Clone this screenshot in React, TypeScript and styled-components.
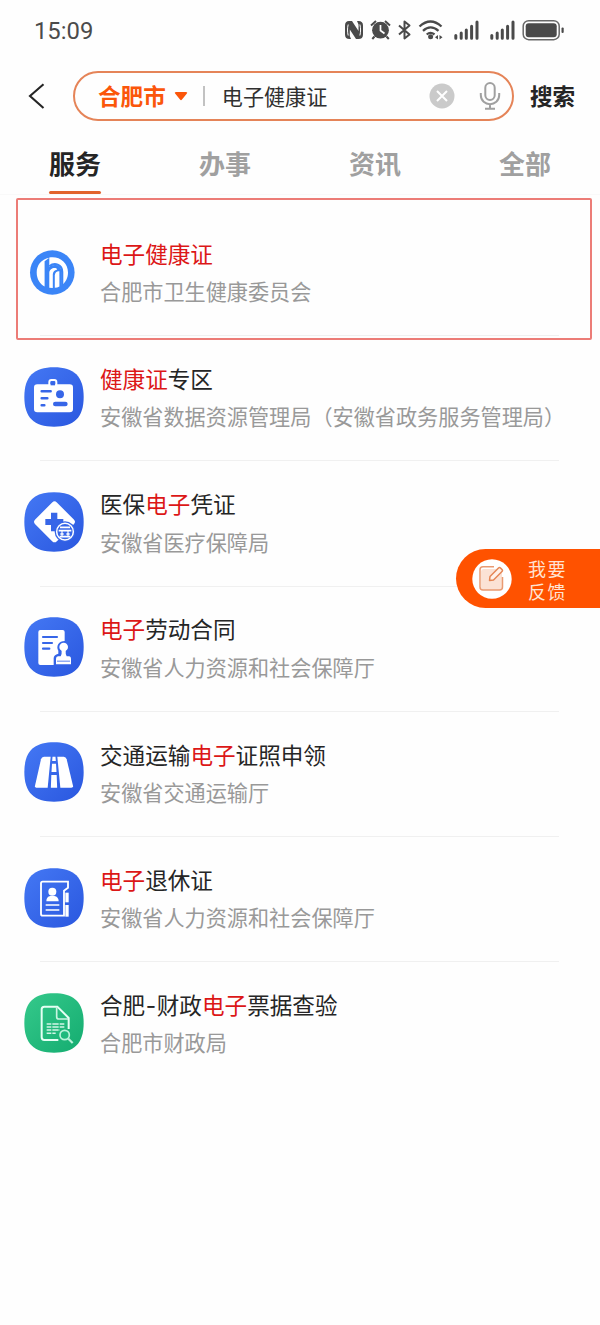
import React from 'react';
import styled, { createGlobalStyle } from 'styled-components';

const GlobalStyle = createGlobalStyle`
  *, *::before, *::after { box-sizing: border-box; }
  body { margin: 0; background: #fefefe; }
`;

const Page = styled.div`
  position: relative;
  width: 600px;
  height: 1325px;
  overflow: hidden;
  background: #fefefe;
  color: #252525;
  font-family: 'Noto Sans CJK SC', sans-serif;
`;

const StatusBar = styled.header`
  display: flex;
  align-items: center;
  justify-content: space-between;
  height: 60px;
  padding: 0 35px 0 34px;
`;

const Clock = styled.span`
  padding-top: 1px;
  font: 400 23.8px/28px Roboto, sans-serif;
  color: #4b4b4b;
`;

const StatusIcons = styled.svg`
  display: block;
  width: 222px;
  height: 24px;
`;

const SearchRow = styled.div`
  display: flex;
  align-items: center;
  height: 50px;
  margin-top: 11px;
  padding-left: 27px;
`;

const BackIcon = styled.svg`
  width: 20px;
  height: 28px;
  margin-right: 26px;
`;

const SearchBox = styled.div`
  display: flex;
  align-items: center;
  width: 441px;
  height: 50px;
  padding: 0 11px 1px 23px;
  border: 2px solid #e58458;
  border-radius: 25px;
`;

const City = styled.span`
  font-size: 22.6px;
  line-height: 32px;
  font-weight: 700;
  color: #fb560a;
`;

const Caret = styled.svg`
  width: 14px;
  height: 10px;
  margin-left: 8px;
`;

const Separator = styled.span`
  width: 2px;
  height: 20px;
  margin: 0 17px 0 15px;
  background: #c2c2c2;
`;

const Query = styled.span`
  flex: 1;
  font-size: 21.1px;
  line-height: 32px;
  color: #303030;
`;

const ClearIcon = styled.svg`
  width: 26px;
  height: 26px;
  margin-right: 24px;
`;

const MicIcon = styled.svg`
  width: 22px;
  height: 30px;
`;

const SearchButton = styled.button`
  margin: 0 0 0 16px;
  padding: 0;
  border: 0;
  background: none;
  font: 700 22.6px/32px 'Noto Sans CJK SC', sans-serif;
  color: #252525;
`;

const Tabs = styled.nav`
  display: flex;
  height: 74px;
  border-bottom: 1px solid #f9f9f9;
`;

const Tab = styled.div<{ $active?: boolean }>`
  display: flex;
  flex: 1;
  flex-direction: column;
  align-items: center;
  padding-top: 22px;
  font-size: 26px;
  line-height: 40px;
  font-weight: 700;
  color: ${({ $active }) => ($active ? '#252525' : '#a0a0a0')};

  &::after {
    content: '';
    width: 52px;
    height: 3.4px;
    margin-top: 8px;
    border-radius: 2px;
    background: ${({ $active }) => ($active ? '#e2632c' : 'transparent')};
  }
`;

const List = styled.main`
  padding: 16px 41px 0 24px;
`;

const Row = styled.section`
  position: relative;
  display: flex;
  align-items: flex-start;
  height: 125.2px;

  &:not(:last-child)::after {
    content: '';
    position: absolute;
    left: 16px;
    right: 0;
    bottom: 0;
    height: 1px;
    background: #f0f0f0;
  }
`;

const RowIcon = styled.svg`
  flex: none;
  width: 60px;
  height: 60px;
  margin: 30.7px 16px 0 0;
`;

const RowText = styled.div`
  display: flex;
  flex-direction: column;
  gap: 7.4px;
  padding-top: 27.8px;
  white-space: nowrap;
`;

const Title = styled.div`
  font-size: 22.6px;
  line-height: 30px;
  color: #252525;
`;

const Match = styled.span`
  color: #dc1717;
`;

const Dash = styled.span`
  padding: 0 0.6px;
  font-family: Inter, sans-serif;
  line-height: 1;
`;

const Agency = styled.div`
  font-size: 21.15px;
  line-height: 30px;
  color: #999999;
`;

const Highlight = styled.div`
  position: absolute;
  left: 16px;
  top: 198px;
  width: 576px;
  height: 142px;
  border: 2px solid #ec7c77;
  border-radius: 2px;
  pointer-events: none;
`;

const Feedback = styled.aside`
  position: absolute;
  top: 549px;
  right: 0;
  display: flex;
  align-items: center;
  width: 144px;
  height: 59px;
  padding-left: 16px;
  border-radius: 30px 0 0 30px;
  background: #ff5200;
`;

const FeedbackIcon = styled.svg`
  width: 40px;
  height: 40px;
`;

const FeedbackText = styled.div`
  width: 42px;
  margin: 2px 0 0 16px;
  font-size: 18px;
  line-height: 22.5px;
  letter-spacing: 1.5px;
  color: #ffe3d3;
`;

const SQUIRCLE =
  'M117 22 C177 22 206 49 206 111 C206 173 177 200 117 200 C57 200 28 173 28 111 C28 49 57 22 117 22Z';

function Tile({ green, children }: { green?: boolean; children: React.ReactNode }) {
  const id = green ? 'tile-green' : 'tile-blue';
  return (
    <RowIcon viewBox="27 21 180 180">
      <defs>
        <linearGradient id={id} x1="0" y1="0" x2="1" y2="1">
          <stop offset="0" stopColor={green ? '#35c98b' : '#4478f4'} />
          <stop offset="1" stopColor={green ? '#14ac70' : '#2a57df'} />
        </linearGradient>
      </defs>
      <path d={SQUIRCLE} fill={`url(#${id})`} />
      {children}
    </RowIcon>
  );
}

const BLUE = '#3766e8';

const HealthLogo = () => (
  <RowIcon viewBox="0 0 60 60">
    <circle cx="28.3" cy="30.5" r="22.3" fill="#3b85f7" />
    <g transform="translate(0 .5)">
      <path d="M25.3 15.3 C17 16.7 12.7 23 12.7 30 C12.7 36.6 16 41.5 20.6 43.9 V18.7Z" fill="#fff" />
      <path
        d="M25.3 15.1 V24.5 C30 20.8 37.5 22.2 37.5 29.5 V42.8 C41.5 40 44 35.5 44 30 C44 21 37 14.8 28.5 14.8 C27.3 14.8 26.2 14.9 25.3 15.1Z"
        fill="#fff"
      />
      <path d="M25.3 45.3 V30.2 C25.3 25.6 32 24 33.2 27 C29.6 28 28.8 30 28.8 33 V45.5Z" fill="#fff" />
      <path d="M30.8 45.3 V33 C30.8 30 33 28.5 35.4 28.8 V44 C34 44.8 32.4 45.2 30.8 45.3Z" fill="#fff" />
      <path d="M25.3 23.8 C30.6 19.7 38.2 21.8 38.2 29.5 V43" fill="none" stroke="#3b85f7" strokeWidth="2.2" />
    </g>
  </RowIcon>
);

const BadgeIcon = () => (
  <Tile>
    <path d="M103 76 V66 Q103 60 109 60 H118 Q124 60 124 66 V76" fill="none" stroke="#fff" strokeWidth="6" />
    <rect x="57" y="73" width="117" height="84" rx="10" fill="#fff" />
    <rect x="107" y="67" width="13" height="9" fill={BLUE} />
    <g stroke={BLUE} strokeLinecap="round" strokeWidth="7.5">
      <path d="M80 94H107M80 115H97M80 136H88" />
      <path d="M121 132H151" strokeWidth="14" />
    </g>
    <circle cx="135" cy="103" r="12" fill={BLUE} />
  </Tile>
);

const MedicalIcon = () => (
  <Tile>
    <rect x="72.5" y="64.5" width="92" height="92" rx="10" transform="rotate(45 118.5 110.5)" fill="#fff" />
    <path d="M108 83h19v19h18v18h-18v19h-19v-19H91v-18h17z" fill={BLUE} />
    <circle cx="150" cy="140" r="31" fill={BLUE} />
    <circle cx="150" cy="140" r="25" fill={BLUE} stroke="#fff" strokeWidth="4.5" />
    <path
      d="M135 127H165M131 137H169M136 147H146M154 147H164M134 155H166"
      stroke="#fff"
      strokeWidth="5"
      fill="none"
    />
    <path d="M141 137V154M159 137V154" stroke="#fff" strokeWidth="3.5" />
  </Tile>
);

const ContractIcon = () => (
  <Tile>
    <path
      d="M76 60H143Q149 60 149 66V93C132 93 122 108 130 122V131Q116 134 116 145V165H76Q70 165 70 159V66Q70 60 76 60Z"
      fill="#fff"
    />
    <path d="M84 81H126M84 99H111M84 116H103" stroke={BLUE} strokeWidth="6.5" strokeLinecap="round" />
    <circle cx="146" cy="111" r="13" fill="#fff" />
    <path d="M140 120H152Q151 132 155 139H163Q168 140 168 146V163H123V146Q123 140 129 139H137Q141 132 140 120Z" fill="#fff" />
    <path d="M126 153.5H165" stroke={BLUE} strokeWidth="2.5" />
  </Tile>
);

const RoadIcon = () => (
  <Tile>
    <path d="M87 65H107L98 158H64Q59 158 60 152L78 73Q80 65 87 65Z" fill="#fff" />
    <path d="M127 65H146Q153 65 155 73L174 152Q175 158 169 158H136Z" fill="#fff" />
    <path d="M112.5 65h9l1 13h-11zM111 86h12l1.5 25h-15zM109 120h16l1.5 38h-19z" fill="#fff" />
  </Tile>
);

const ContactIcon = () => (
  <Tile>
    <path
      d="M147 164H83Q78 164 78 159V67Q78 62 83 62H159V80L147 89Z"
      fill="none"
      stroke="#fff"
      strokeWidth="5.5"
    />
    <circle cx="112" cy="92" r="12" fill="#fff" />
    <path d="M94 121Q94 107 106 105H118Q131 107 131 121Z" fill="#fff" />
    <path d="M92 132H133M92 147H133" stroke="#fff" strokeWidth="4.5" />
    <rect x="151" y="95" width="10" height="29" fill="#fff" />
    <rect x="151" y="132" width="10" height="35" fill="#fff" />
  </Tile>
);

const InvoiceIcon = () => (
  <Tile green>
    <path
      d="M130 162H88Q80 162 80 154V70Q80 62 88 62H127L161 96V129"
      fill="none"
      stroke="#e5fff4"
      strokeWidth="6"
    />
    <path d="M125 64V92Q125 99 132 99H159" fill="none" stroke="#c9f4e1" strokeWidth="5" />
    <path
      d="M95 114H148M95 123H148M95 132H135M95 142H122"
      stroke="#d3f5e6"
      strokeWidth="4.5"
      strokeDasharray="14 3 19 3"
    />
    <circle cx="149" cy="147" r="14" fill="#1fb97c" stroke="#baf3da" strokeWidth="5" />
    <path d="M160 158L173 171" stroke="#baf3da" strokeWidth="6.5" />
  </Tile>
);

type Part = { text: string; hit?: boolean; dash?: boolean };

const services: { icon: React.ComponentType; title: Part[]; agency: string }[] = [
  { icon: HealthLogo, title: [{ text: '电子健康证', hit: true }], agency: '合肥市卫生健康委员会' },
  {
    icon: BadgeIcon,
    title: [{ text: '健康证', hit: true }, { text: '专区' }],
    agency: '安徽省数据资源管理局（安徽省政务服务管理局）',
  },
  {
    icon: MedicalIcon,
    title: [{ text: '医保' }, { text: '电子', hit: true }, { text: '凭证' }],
    agency: '安徽省医疗保障局',
  },
  {
    icon: ContractIcon,
    title: [{ text: '电子', hit: true }, { text: '劳动合同' }],
    agency: '安徽省人力资源和社会保障厅',
  },
  {
    icon: RoadIcon,
    title: [{ text: '交通运输' }, { text: '电子', hit: true }, { text: '证照申领' }],
    agency: '安徽省交通运输厅',
  },
  {
    icon: ContactIcon,
    title: [{ text: '电子', hit: true }, { text: '退休证' }],
    agency: '安徽省人力资源和社会保障厅',
  },
  {
    icon: InvoiceIcon,
    title: [
      { text: '合肥' },
      { text: '-', dash: true },
      { text: '财政' },
      { text: '电子', hit: true },
      { text: '票据查验' },
    ],
    agency: '合肥市财政局',
  },
];

const INK = '#4a4a4a';

const StatusGlyphs = () => (
  <StatusIcons viewBox="343 18 222 24">
    <path d="M349 21H352L358.5 31V24.5L357 21H358.5Q363 21 363 25.5V34.5Q363 39 358.5 39H356L349.8 29.5V36L351 39H349.5Q345 39 345 34.5V25.5Q345 21 349 21Z" fill={INK} />
    <path
      d="M348.2 35.5C347.3 32 347.3 28 348.2 24.5M359.9 24.5C360.8 28 360.8 32 359.9 35.5M353.5 20.5L358 27M350.5 33.5L355 39.5"
      fill="none"
      stroke="#fefefe"
      strokeWidth="1"
    />
    <circle cx="380.5" cy="30.2" r="8.4" fill={INK} />
    <path
      d="M371 25.5L376 21M390 25.5L385 21M374.5 36.5L372.3 39M386.5 36.5L388.8 39"
      stroke={INK}
      strokeWidth="2"
    />
    <path d="M380.5 25V30.5L384.5 33.5" fill="none" stroke="#fefefe" strokeWidth="1.7" />
    <path
      d="M399 25.5L409.5 34.5L404.5 38.5V21.5L409.5 25.5L399 34.5"
      fill="none"
      stroke={INK}
      strokeWidth="2"
      strokeLinejoin="round"
    />
    <path
      d="M419.5 26.5Q430.5 16.5 441.5 26.5M423 30.8Q430.5 24 438.5 30.8M426.7 34.5Q430.5 31.2 434.5 34.5"
      fill="none"
      stroke={INK}
      strokeWidth="2.3"
    />
    <circle cx="430.6" cy="36.8" r="2.5" fill={INK} />
    <path d="M438 35v4.4l-3-2.2zM439.5 35v4.4l3-2.2z" fill={INK} />
    {[454, 490].map((x) => (
      <path
        key={x}
        d={`M${x + 1.8} 38.2V35.5M${x + 7.2} 38.2V33M${x + 12.3} 38.2V30M${x + 17.6} 38.2V26.3M${x + 23} 38.2V22`}
        stroke={INK}
        strokeWidth="3"
        strokeLinecap="round"
      />
    ))}
    <rect x="523.2" y="20.7" width="36" height="19" rx="5.5" fill="none" stroke="#686868" strokeWidth="1.5" />
    <rect x="525.7" y="23.2" width="31" height="14" rx="3" fill={INK} />
    <rect x="561.5" y="27.5" width="2.2" height="5.5" rx="1" fill={INK} />
  </StatusIcons>
);

const renderPart = ({ text, hit, dash }: Part) => {
  if (hit) return <Match key={text}>{text}</Match>;
  if (dash) return <Dash key={text}>{text}</Dash>;
  return text;
};

export default function App() {
  return (
    <Page>
      <GlobalStyle />
      <StatusBar>
        <Clock>15:09</Clock>
        <StatusGlyphs />
      </StatusBar>

      <SearchRow>
        <BackIcon viewBox="0 0 20 28" fill="none" stroke="#252525" strokeWidth="2.1">
          <path d="M16.5 2.2L3 14L16.5 26" />
        </BackIcon>
        <SearchBox>
          <City>合肥市</City>
          <Caret viewBox="0 0 14 10">
            <path d="M2 1H12Q14 1 12.7 2.7L8 8.5Q7 9.8 6 8.5L1.3 2.7Q0 1 2 1Z" fill="#fb560a" />
          </Caret>
          <Separator />
          <Query>电子健康证</Query>
          <ClearIcon viewBox="0 0 26 26">
            <circle cx="13" cy="13" r="12.5" fill="#cacaca" />
            <path d="M8 8L18 18M18 8L8 18" stroke="#fefefe" strokeWidth="2" />
          </ClearIcon>
          <MicIcon viewBox="0 0 22 30" fill="none" stroke="#a0a0a0" strokeWidth="2">
            <rect x="6.3" y="2" width="9.4" height="17" rx="4.7" />
            <path d="M1.8 12V14C1.8 26.2 20.2 26.2 20.2 14V12M11 23V27.5M6 27.7H16" />
          </MicIcon>
        </SearchBox>
        <SearchButton>搜索</SearchButton>
      </SearchRow>

      <Tabs>
        <Tab $active>服务</Tab>
        <Tab>办事</Tab>
        <Tab>资讯</Tab>
        <Tab>全部</Tab>
      </Tabs>

      <List>
        {services.map(({ icon: Icon, title, agency }, i) => (
          <Row key={i}>
            <Icon />
            <RowText>
              <Title>{title.map(renderPart)}</Title>
              <Agency>{agency}</Agency>
            </RowText>
          </Row>
        ))}
      </List>

      <Highlight />

      <Feedback>
        <FeedbackIcon viewBox="0 0 40 40">
          <circle cx="20" cy="20" r="19.7" fill="#fff" />
          <rect x="9" y="10" width="21" height="21" rx="3" fill="#fbe2d5" />
          <path
            d="M22 7.8H11Q8 7.8 8 10.8V28Q8 31 11 31H27.5Q30.5 31 30.5 28V18"
            fill="none"
            stroke="#e99a72"
            strokeWidth="1.5"
          />
          <path
            d="M18 17.5L26.5 9Q27.5 8 28.5 9L30 10.5Q31 11.5 30 12.5L21.5 21L17.5 21.5Z"
            fill="#fff1e9"
            stroke="#e58655"
            strokeWidth="1.5"
            strokeLinejoin="round"
          />
        </FeedbackIcon>
        <FeedbackText>我要反馈</FeedbackText>
      </Feedback>
    </Page>
  );
}
